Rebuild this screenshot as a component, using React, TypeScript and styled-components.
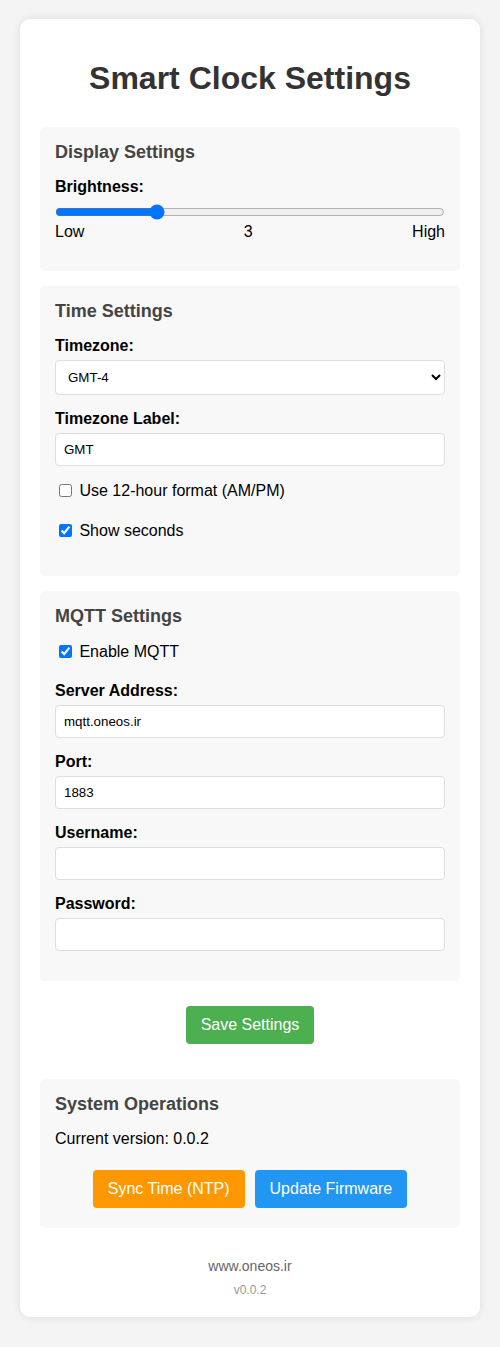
import React, { useState } from "react";
import styled, { createGlobalStyle } from "styled-components";

const GlobalStyle = createGlobalStyle`
  html, body { margin: 0; padding: 0; }
  body {
    background: #f4f4f4;
    font-family: "Liberation Sans", Arial, sans-serif;
    color: #000;
  }
  #root { padding: 19px 20px 30px; }
`;

const Card = styled.div`
  background: #fff;
  border-radius: 10px;
  box-shadow: 0 0 10px rgba(0, 0, 0, 0.1);
  padding: 20px;
  box-sizing: border-box;
  max-width: 460px;
  margin: 0 auto;
  overflow: hidden;
`;

const Title = styled.h1`
  font-size: 32px;
  font-weight: bold;
  color: #333;
  text-align: center;
  margin: 21px 0 30px;
`;

const Section = styled.div`
  background: #f8f8f8;
  border-radius: 5px;
  padding: 15px;
  margin-bottom: 15px;
`;

const SectionTitle = styled.h3`
  font-size: 18px;
  font-weight: bold;
  color: #444;
  margin: 0 0 15px;
`;

const FormGroup = styled.div`
  margin-bottom: 15px;
`;

const Label = styled.label`
  display: block;
  margin-bottom: 5px;
  font-size: 16px;
  font-weight: bold;
`;

const CheckLabel = styled.label`
  display: block;
  padding-bottom: 5px;
  font-size: 16px;
  font-weight: normal;
  line-height: 20px;

  input {
    vertical-align: -1px;
  }
`;

const TextInput = styled.input`
  display: block;
  width: 100%;
  box-sizing: border-box;
  padding: 8px;
  border: 1px solid #ddd;
  border-radius: 4px;
  background: #fff;
  font-family: "Liberation Sans", Arial, sans-serif;
  font-size: 13.333px;
  color: #000;
`;

const Select = styled.select`
  display: block;
  width: 100%;
  box-sizing: border-box;
  padding: 8px;
  border: 1px solid #ddd;
  border-radius: 4px;
  background: #fff;
  font-family: "Liberation Sans", Arial, sans-serif;
  font-size: 13.333px;
  color: #000;
`;

const Range = styled.input`
  display: block;
  width: 100%;
  box-sizing: border-box;
  margin: 8px 0 2px;
`;

const RangeLabels = styled.div`
  display: flex;
  justify-content: space-between;
  font-size: 16px;
  margin-top: 3px;
`;

const Paragraph = styled.p`
  margin: 0 0 16px;
  font-size: 16px;
`;

const Center = styled.div<{ $pt?: number; $pb?: number }>`
  display: flex;
  justify-content: center;
  padding-top: ${(p) => p.$pt ?? 0}px;
  padding-bottom: ${(p) => p.$pb ?? 0}px;
`;

const Button = styled.button<{ $bg: string }>`
  background: ${(p) => p.$bg};
  color: #fff;
  border: none;
  border-radius: 4px;
  padding: 10px 15px;
  font-family: "Liberation Sans", Arial, sans-serif;
  font-size: 16px;
  line-height: normal;
  margin: 0 5px;
  cursor: pointer;
`;

const Footer = styled.div`
  margin-top: 30px;
  text-align: center;
  color: #666;
  font-size: 14px;
`;

const Version = styled.div`
  margin-top: 9px;
  font-size: 12px;
  color: #999;
`;

export default function App() {
  const [brightness, setBrightness] = useState(3);
  const [tz, setTz] = useState("-4");
  const [tzLabel, setTzLabel] = useState("GMT");
  const [h12, setH12] = useState(false);
  const [secs, setSecs] = useState(true);
  const [mqtt, setMqtt] = useState(true);
  const [server, setServer] = useState("mqtt.oneos.ir");
  const [port, setPort] = useState("1883");
  const [user, setUser] = useState("");
  const [pass, setPass] = useState("");

  const zones: string[] = [];
  for (let i = -12; i <= 14; i++) zones.push(String(i));

  return (
    <>
      <GlobalStyle />
      <Card>
        <Title>Smart Clock Settings</Title>

        <Section>
          <SectionTitle>Display Settings</SectionTitle>
          <FormGroup>
            <Label htmlFor="brightness">Brightness:</Label>
            <Range
              id="brightness"
              type="range"
              min={1}
              max={9}
              value={brightness}
              onChange={(e) => setBrightness(Number(e.target.value))}
            />
            <RangeLabels>
              <span>Low</span>
              <span>{brightness}</span>
              <span>High</span>
            </RangeLabels>
          </FormGroup>
        </Section>

        <Section>
          <SectionTitle>Time Settings</SectionTitle>
          <FormGroup>
            <Label htmlFor="tz">Timezone:</Label>
            <Select id="tz" value={tz} onChange={(e) => setTz(e.target.value)}>
              {zones.map((z) => (
                <option key={z} value={z}>
                  {Number(z) === 0 ? "GMT" : `GMT${Number(z) > 0 ? "+" : ""}${z}`}
                </option>
              ))}
            </Select>
          </FormGroup>
          <FormGroup>
            <Label htmlFor="tzlabel">Timezone Label:</Label>
            <TextInput id="tzlabel" type="text" value={tzLabel} onChange={(e) => setTzLabel(e.target.value)} />
          </FormGroup>
          <FormGroup>
            <CheckLabel>
              <input type="checkbox" checked={h12} onChange={(e) => setH12(e.target.checked)} /> Use 12-hour format (AM/PM)
            </CheckLabel>
          </FormGroup>
          <FormGroup>
            <CheckLabel>
              <input type="checkbox" checked={secs} onChange={(e) => setSecs(e.target.checked)} /> Show seconds
            </CheckLabel>
          </FormGroup>
        </Section>

        <Section>
          <SectionTitle>MQTT Settings</SectionTitle>
          <FormGroup>
            <CheckLabel>
              <input type="checkbox" checked={mqtt} onChange={(e) => setMqtt(e.target.checked)} /> Enable MQTT
            </CheckLabel>
          </FormGroup>
          <FormGroup>
            <Label htmlFor="server">Server Address:</Label>
            <TextInput id="server" type="text" value={server} onChange={(e) => setServer(e.target.value)} />
          </FormGroup>
          <FormGroup>
            <Label htmlFor="port">Port:</Label>
            <TextInput id="port" type="number" value={port} onChange={(e) => setPort(e.target.value)} />
          </FormGroup>
          <FormGroup>
            <Label htmlFor="user">Username:</Label>
            <TextInput id="user" type="text" value={user} onChange={(e) => setUser(e.target.value)} />
          </FormGroup>
          <FormGroup>
            <Label htmlFor="pass">Password:</Label>
            <TextInput id="pass" type="password" value={pass} onChange={(e) => setPass(e.target.value)} />
          </FormGroup>
        </Section>

        <Center $pt={10} $pb={35}>
          <Button $bg="#4CAF50">Save Settings</Button>
        </Center>

        <Section>
          <SectionTitle>System Operations</SectionTitle>
          <Paragraph>Current version: 0.0.2</Paragraph>
          <Center $pt={6} $pb={5}>
            <Button $bg="#ff9800">Sync Time (NTP)</Button>
            <Button $bg="#2196F3">Update Firmware</Button>
          </Center>
        </Section>

        <Footer>
          <div>www.oneos.ir</div>
          <Version>v0.0.2</Version>
        </Footer>
      </Card>
    </>
  );
}
